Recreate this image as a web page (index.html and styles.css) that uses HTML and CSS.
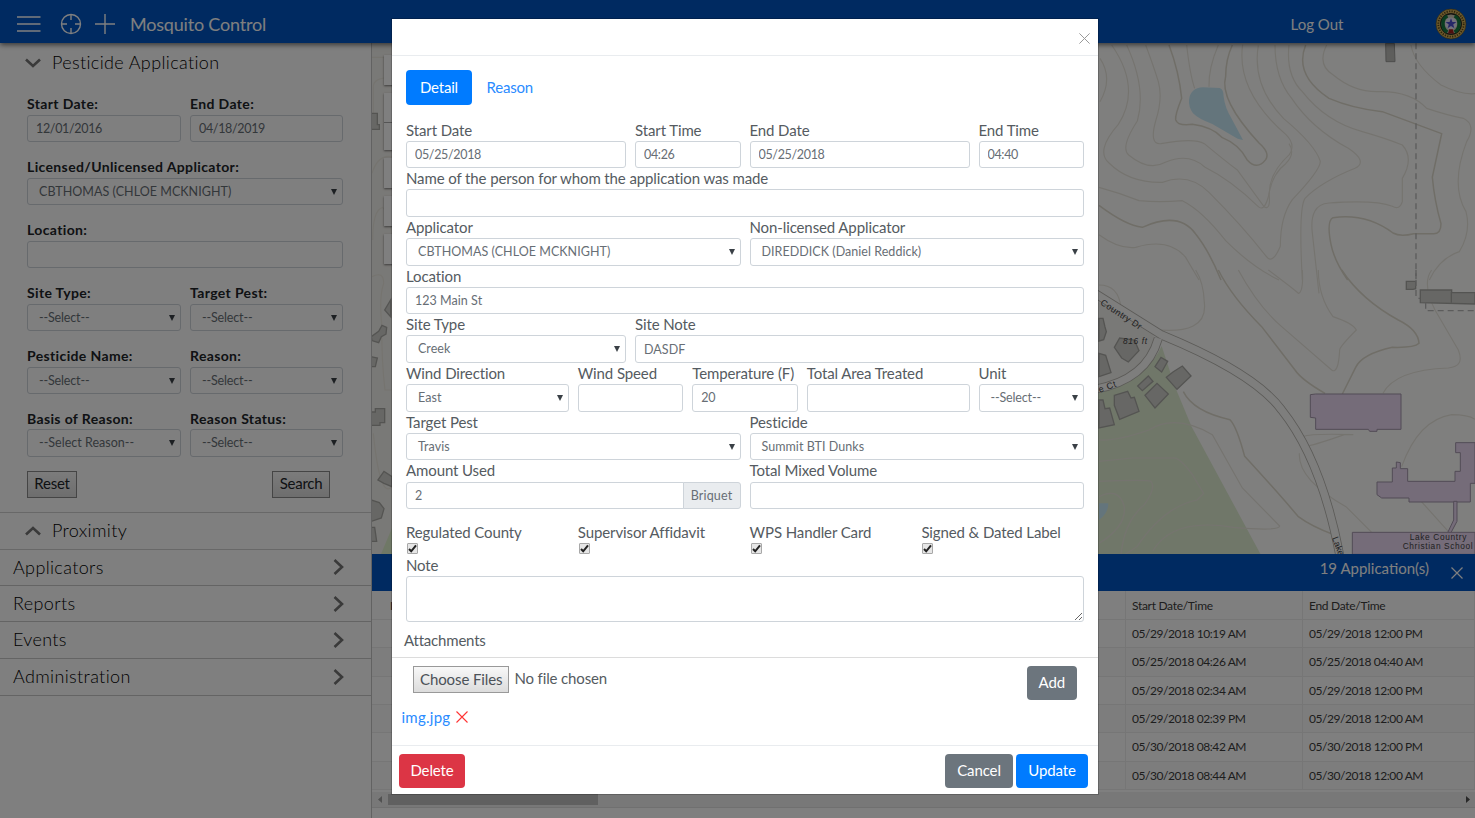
FILE: index.html
```
<!DOCTYPE html>
<html lang="en">
<head>
<meta charset="utf-8">
<title>Mosquito Control</title>
<link rel="stylesheet" href="styles.css">
</head>
<body>
<div class="app">
  <header class="topbar">
    <svg class="ic-menu" width="24" height="20" viewBox="0 0 24 20"><path d="M0 3h23.5M0 10h23.5M0 17h23.5"/></svg>
    <svg class="ic-target" width="22" height="22" viewBox="0 0 22 22"><circle cx="11" cy="11" r="9.5"/><path d="M11 1v6M11 15v6M1 11h6M15 11h6"/></svg>
    <svg class="ic-plus" width="20" height="20" viewBox="0 0 20 20"><path d="M10 0v20M0 10h20"/></svg>
    <h1>Mosquito Control</h1>
    <span class="logout">Log Out</span>
    <svg class="seal" width="32" height="32" viewBox="0 0 32 32">
      <circle cx="16" cy="16" r="15" fill="#d8b45c" stroke="#5c4a14" stroke-width=".6"/>
      <circle cx="16" cy="16" r="12.7" fill="none" stroke="#5a4614" stroke-width="1.8" stroke-dasharray="1.2 1.3"/>
      <circle cx="16" cy="16" r="10.3" fill="#cfcbb8" stroke="#2a2a20" stroke-width="1.4"/>
      <path d="M12.500 8C6.500 10.500 6.500 20.500 12.500 24M19.500 8C25.500 10.500 25.500 20.500 19.500 24" fill="none" stroke="#157a40" stroke-width="3.4"/>
      <circle cx="16" cy="15.500" r="6" fill="#e4e2f4"/>
      <path d="M16 10.200l1.400 3.700 4 .1-3.200 2.400 1.200 3.900L16 18l-3.400 2.300 1.200-3.900-3.200-2.400 4-.1z" fill="#4d4ed0"/>
      <path d="M13 25.500l1.200-4.200h3.600l1.200 4.200z" fill="#9c1c1c"/>
    </svg>
  </header>

  <div class="main">
    <aside class="sidebar">
      <div class="sub first"><svg width="16" height="10" viewBox="0 0 16 10"><path d="M1 1.500l7 6.500 7-6.500"/></svg>Pesticide Application</div>
      <div class="filters">
        <label><b>Start Date:</b><input class="num" value="12/01/2016"></label>
        <label><b>End Date:</b><input class="num" value="04/18/2019"></label>
        <label class="full"><b>Licensed/Unlicensed Applicator:</b><span class="select">CBTHOMAS (CHLOE MCKNIGHT)</span></label>
        <label class="full"><b>Location:</b><input value=""></label>
        <label><b>Site Type:</b><span class="select dash">--Select--</span></label>
        <label><b>Target Pest:</b><span class="select dash">--Select--</span></label>
        <label><b>Pesticide Name:</b><span class="select dash">--Select--</span></label>
        <label><b>Reason:</b><span class="select dash">--Select--</span></label>
        <label><b>Basis of Reason:</b><span class="select dash wide">--Select Reason--</span></label>
        <label><b>Reason Status:</b><span class="select dash">--Select--</span></label>
      </div>
      <div class="filter-actions"><button class="native">Reset</button><button class="native">Search</button></div>
      <div class="sub second"><svg width="16" height="10" viewBox="0 0 16 10"><path d="M1 8.500L8 2l7 6.500"/></svg>Proximity</div>
      <nav>
        <a>Applicators<svg width="11" height="16" viewBox="0 0 11 16"><path d="M1.500 1L9 8l-7.500 7"/></svg></a>
        <a>Reports<svg width="11" height="16" viewBox="0 0 11 16"><path d="M1.500 1L9 8l-7.500 7"/></svg></a>
        <a>Events<svg width="11" height="16" viewBox="0 0 11 16"><path d="M1.500 1L9 8l-7.500 7"/></svg></a>
        <a>Administration<svg width="11" height="16" viewBox="0 0 11 16"><path d="M1.500 1L9 8l-7.500 7"/></svg></a>
      </nav>
    </aside>

    <section class="content">
      <div class="map">
        <svg class="map-art" viewBox="372 43 1103 511" width="1103" height="511">
          <!-- west edge -->
          <g transform="translate(0 0)">
            <rect x="372" y="43" width="30" height="511" fill="#f3f2ee"/>
            <g class="contour thin" transform="scale(.33333)"><path d="M1116 172h60M1120 340V260q0-26 50-28M1116 520q18-58 60-50M1118 720q0-90 30-98q20 20 28 90M1116 830q35-18 35 20q-14 40-6 120q0 120 10 200h20M1120 1300q20 200 56 160"/></g>
            <g class="bldg" transform="scale(.33333)"><path d="M1114 340h18v34h6v14h-24z"/><path d="M1154 930l18-30v50z"/><path d="M1114 1010l22-16 10-18 14 6-2 20-14 8-8 18-20-6z"/><path d="M1114 1070l18 4-6 26h-12z"/><path d="M1114 1236h12v-10h28v42h-14v8h-26z"/><path d="M1134 1440l18-26 24 16v30l-24-10z"/><path d="M1114 1500l24 8 14 18-8 28-30 10z"/><path d="M1114 1582h10l6 42h-16z"/></g>
            <path d="M381 554l11-26v26z" fill="#dff0cc"/>
          </g>
          <!-- north-east contours -->
          <g transform="translate(1095 0) scale(.33333)">
            <path d="M282 300q4-36 42-38l50 2q12 4 12 26 4 34 24 66l34 64-16-4-76-44q-40-14-58-32-14-20-12-40z" fill="#c9ebf8"/>
            <g class="contour thin">
              <path d="M50 135q90 130 20 238-70 80-28 116 60 60 160 58 80-30 140 30 100 100 170 190 20 30 44-28 0-90 36-140 84-88 84-115-16-50-110-128-96-100-76-220"/>
              <path d="M95 135q60 130 32 228-52 80-26 102 60 50 110 22 70-30 118 14 80 40 160 118 20 20 34-40 0-60 60-115 20-30-10-60-150-130-130-270"/>
              <path d="M152 135q26 70 38 110 14 50-8 118-20 72 16 68 100-18 130 0 60 50 100 80l80 110q20 10 14-40 10-60 50-90 30-30 10-60"/>
              <path d="M15 175q40 60 0 130"/><path d="M275 135q10 90 24 130M370 135q-30 70-28 125"/>
              <path d="M582 135q-10 90 40 140 70 90 180 120 70 20 120 40 36 40 0 100v70q-8 26-30 14-50-20-190-10-60 4-50 90l20 181"/>
              <path d="M540 135q0 100 50 160 60 90 170 150 60 40 20 60-100 40-150 90-20 30-8 245"/>
              <path d="M12 562q60 16 120 40 60 6 130 0 60 30 130 120 80 80 160 118"/>
              <path d="M12 704q60 44 110 38 100-30 150 30l40 68"/>
              <path d="M695 135q-30 60 20 90 60 50 130 50 100-4 150 50 60 20 110 30 40 20 10 70-50 130-2 210 16 60-20 120-60 20-90 85"/>
              <path d="M948 135q10 60 90 120 60 30 102 26"/>
            </g>
            <g class="contour">
              <path d="M222 135q30 80 38 160-20 50-18 64 6 20 50 14 60 8 90 40 50 20 74 66 30 34 56 0 14-20-20-50-120-130-100-200 0-50 20-94"/>
              <path d="M632 135q-36 90 70 160 70 30 160 40l178 66-28 130q6 70 26 140 0 30-22 30l-60 0q-40 10-62-2-80-60-180-46-20 10-6 80 10 50 50 107"/>
              <path d="M12 616q80 60 130 66 110-50 160 20 40 50 76 138"/>
            </g>
            <path d="M872 130h26l2 55h-27z" fill="#bcbcb9" stroke="#9a9a98" stroke-width="3"/>
            <path d="M963 130v710" class="parcel"/>
          </g>
          <!-- south-east: park, roads, school -->
          <g transform="translate(1095 270) scale(.33333)">
            <path d="M0 90L175 195 190 235 100 330 0 360z" fill="#f3f2ee"/>
            <path d="M12 370Q160 320 200 228L240 350 290 470 498 855H0V370z" fill="#e1efd2"/>
            <path d="M12 700h28q0 30-28 50z" fill="#c9ebf8"/>
            <g class="contour thin">
              <path d="M12 45q60 0 66 70M170 178q170 20 158-80-2-60-26-98M430 0q60 110 130 170l150 130q20 14 24-60 0-10 50-60-10-20-70-40Q670 80 670 0M520 0q80 60 90 70 16-4 12-70M12 510q50 4 150-30 80-50 190 14l90 160 112 114q0 16-140 4-180-30-240 70M12 574l100-10h120q20-6 60 50l34 56-20 20q-100 20-180 140l-46 30M12 634q140-6 156 0 16 20-20 70-60 50-70 150M12 680q60-30 76 30 6 60-76 110M628 520q-40 30 120-26M613 550q-4 80 140 160l80 80M1010 0q-30 40 10 120l70 120q20 50-30 54-160 6-196 76M920 590q50-140 150-156 50 0 70 14M975 690l90 100M625 500q20-10 150-6"/>
            </g>
            <g class="contour"><path d="M370 0q40 80 130 170l100 130q20 30 90 70M740 0q60 90 170 150 60 30 62 70-14 14-80 12-90 20-110 60l-40 80M265 365q30 60 140 84 20 20 44 110 110 120 160 180 40 30 110 56"/></g>
            <g class="road"><path d="M0 70L200 195Q480 310 560 420 680 570 735 860"/><path d="M190 205Q155 330 0 358"/></g>
            <g class="road-fill"><path d="M0 70L200 195Q480 310 560 420 680 570 735 860"/><path d="M190 205Q155 330 0 358"/></g>
            <g class="bldg">
              <path d="M12 145h12l6 26 4 14-8 24-14 4z"/><path d="M12 250l20 6 16 52-36 12z"/>
              <path d="M58 232l16-28 44 6 14 32-32 34-20-12z"/>
              <path d="M180 290l18-28 20 12-18 32z"/><path d="M214 322l20-16 28-18 26 30-42 40z"/><path d="M150 376l36-36 34 32-40 42z"/><path d="M128 348l32-30 14 16-32 28z"/>
              <path d="M58 376l40-12 10 20 10-2 14 42-58 24-16-42z"/><path d="M12 390h12l6 26 14-2 14 50-46 10z"/>
              <path d="M934 34h28v22l-8 2h-20z"/><path d="M976 60h94v8h70v34l-164-4z"/><path d="M1069 66v32"/>
            </g>
            <g class="school">
              <path d="M646 374l16-2h256v106h-72v6h-22l-4-6H662v-34l-16-2z"/>
              <path d="M1140 518h-58v30h14v56h-16v30H938v-38h-22v-18l-12-2v18h-12v42h-46v38l14 10h82v12h184v-56h14z"/>
              <path d="M1076 694h10v60l-18 34h-10l18-38z"/><path d="M772 787h368v66H772z"/>
            </g>
            <path d="M963 0v82l12 4M992 98v24h148" class="parcel"/>
            <g class="map-text">
              <text transform="translate(14 102) rotate(33)" textLength="142">Country Dr</text>
              <text x="84" y="221" textLength="72" font-style="italic" class="small">816 ft</text>
              <text transform="translate(14 368) rotate(-20)" textLength="54">e Ct</text>
              <text transform="translate(711 804) rotate(70)">Lake</text>
              <text x="944" y="810" textLength="170" class="small">Lake Country</text>
              <text x="923" y="838" textLength="210" class="small">Christian School</text>
            </g>
          </g>
        </svg>
        <div class="map-tools"><i></i><i class="tall"></i><i></i><i></i><i></i></div>
      </div>
      <div class="results-bar"><span>19 Application(s)</span><svg width="12" height="12" viewBox="0 0 12 12"><path d="M.5.5l11 11M11.500.5l-11 11"/></svg></div>
      <div class="results">
        <div class="row head"><span>ID</span><span>Start Date/Time</span><span>End Date/Time</span></div>
        <div class="row"><span></span><span>05/29/2018 10:19 AM</span><span>05/29/2018 12:00 PM</span></div>
        <div class="row alt"><span></span><span>05/25/2018 04:26 AM</span><span>05/25/2018 04:40 AM</span></div>
        <div class="row"><span></span><span>05/29/2018 02:34 AM</span><span>05/29/2018 12:00 PM</span></div>
        <div class="row alt"><span></span><span>05/29/2018 02:39 PM</span><span>05/29/2018 12:00 AM</span></div>
        <div class="row"><span></span><span>05/30/2018 08:42 AM</span><span>05/30/2018 12:00 PM</span></div>
        <div class="row alt"><span></span><span>05/30/2018 08:44 AM</span><span>05/30/2018 12:00 AM</span></div>
      </div>
      <div class="scrollbar"><svg width="4" height="7" viewBox="0 0 4 7"><path d="M4 0v7L0 3.500z" fill="#a3a3a3"/></svg><div class="thumb"></div><svg width="4" height="7" viewBox="0 0 4 7"><path d="M0 0v7l4-3.500z" fill="#505050"/></svg></div>
    </section>
  </div>
</div>

<div class="backdrop">
  <div class="modal">
    <div class="modal-head"><svg width="11" height="11" viewBox="0 0 11 11"><path d="M.4.4l10.200 10.200M10.600.4L.4 10.600"/></svg></div>
    <div class="tabs"><span class="tab active">Detail</span><span class="tab">Reason</span></div>
    <div class="form">
      <label class="c4">Start Date<input class="num" value="05/25/2018"></label>
      <label class="c2">Start Time<input class="num" value="04:26"></label>
      <label class="c4">End Date<input class="num" value="05/25/2018"></label>
      <label class="c2">End Time<input class="num" value="04:40"></label>
      <label class="c12">Name of the person for whom the application was made<input value=""></label>
      <label class="c6">Applicator<span class="select">CBTHOMAS (CHLOE MCKNIGHT)</span></label>
      <label class="c6">Non-licensed Applicator<span class="select">DIREDDICK (Daniel Reddick)</span></label>
      <label class="c12">Location<input value="123 Main St"></label>
      <label class="c4">Site Type<span class="select">Creek</span></label>
      <label class="c8">Site Note<input value="DASDF"></label>
      <label class="c3">Wind Direction<span class="select">East</span></label>
      <label class="c2">Wind Speed<input value=""></label>
      <label class="c2">Temperature (F)<input class="num" value="20"></label>
      <label class="c3">Total Area Treated<input value=""></label>
      <label class="c2">Unit<span class="select dash">--Select--</span></label>
      <label class="c6">Target Pest<span class="select">Travis</span></label>
      <label class="c6">Pesticide<span class="select">Summit BTI Dunks</span></label>
      <label class="c6">Amount Used<span class="group"><input class="num" value="2"><span class="addon">Briquet</span></span></label>
      <label class="c6">Total Mixed Volume<input value=""></label>
    </div>
    <div class="checks">
      <label>Regulated County<span class="check"><svg width="9" height="9" viewBox="0 0 9 9"><path d="M1 5l2.200 2.300L8 1.300"/></svg></span></label>
      <label>Supervisor Affidavit<span class="check"><svg width="9" height="9" viewBox="0 0 9 9"><path d="M1 5l2.200 2.300L8 1.300"/></svg></span></label>
      <label>WPS Handler Card<span class="check"><svg width="9" height="9" viewBox="0 0 9 9"><path d="M1 5l2.200 2.300L8 1.300"/></svg></span></label>
      <label>Signed &amp; Dated Label<span class="check"><svg width="9" height="9" viewBox="0 0 9 9"><path d="M1 5l2.200 2.300L8 1.300"/></svg></span></label>
    </div>
    <label class="note">Note<textarea></textarea></label>
    <div class="attach-title">Attachments</div>
    <div class="attach">
      <button class="native">Choose Files</button><span class="nofile">No file chosen</span><button class="btn gray add">Add</button>
    </div>
    <div class="file"><a>img.jpg</a><svg width="12" height="12" viewBox="0 0 12 12"><path d="M.5.5l11 11M11.500.5l-11 11"/></svg></div>
    <div class="modal-foot"><button class="btn red">Delete</button><button class="btn gray cancel">Cancel</button><button class="btn blue">Update</button></div>
  </div>
</div>
</body>
</html>
```
FILE: styles.css
```
* { box-sizing: border-box; }
body { margin: 0; width: 1475px; height: 818px; overflow: hidden; background: #fff; font: 15px/1.3 Lato, "Liberation Sans", sans-serif; color: #212529; }
svg { display: block; flex: none; fill: none; }
button, input, textarea { font-family: inherit; margin: 0; }

.app { display: flex; flex-direction: column; height: 818px; }
.topbar { position: relative; z-index: 2; flex: none; display: flex; align-items: center; height: 43px; padding: 5px 8px 0 17px; background: #0054c2; box-shadow: 0 2px 5px rgba(0,0,0,.55); color: #fff; }
.topbar svg path, .topbar .ic-target circle { stroke-width: 1.4; }
.ic-menu, .ic-target, .ic-plus { stroke: #fff; }
.ic-target { margin-left: 18.500px; }
.ic-plus { margin-left: 13.500px; }
.topbar h1 { margin: 2px 0 0 15px; font-size: 18px; font-weight: 400; letter-spacing: -.2px; }
.logout { margin: 1px 0 0 auto; }
.topbar .seal { margin-left: 91.500px; }
.topbar .seal path { stroke-width: 0; }
.topbar .seal path[stroke] { stroke-width: 3.4; }

.main { flex: 1; display: flex; min-height: 0; }
.sidebar { width: 372px; flex: none; border-right: 1px solid #c4c4c4; background: #fff; }
.sidebar svg { stroke: #747474; stroke-width: 2.6; }
.sub { display: flex; align-items: center; gap: 11.500px; padding-left: 24.500px; font-size: 18px; font-weight: 300; letter-spacing: .36px; color: #000; }
.sub.first { height: 39px; }
.sub.second { height: 38px; border-top: 1px solid #d0d0d0; border-bottom: 1px solid #d0d0d0; }
.filters { display: grid; grid-template-columns: 154px 153px; column-gap: 9px; row-gap: 14.850px; padding: 12.400px 0 0 27px; }
.filters label { height: 48px; display: flex; flex-direction: column; }
.filters .full { grid-column: 1 / 3; }
.filters b { height: 21px; line-height: 19px; font-size: 14px; letter-spacing: .36px; white-space: nowrap; }
.filter-actions { display: flex; justify-content: space-between; padding: 14px 41px 0 27px; height: 55px; }
.native { height: 27px; padding: 0 6px; border: 1px solid #999; background: linear-gradient(#f8f8f8, #dcdcdc); font-size: 15px; letter-spacing: -.1px; color: #4c5258; }
.filter-actions .native { color: #212529; padding: 0 0 2px; width: 50px; border-color: #8a8a8a; letter-spacing: -.25px; }
.filter-actions .native + .native { width: 58px; }
nav a { display: flex; align-items: center; justify-content: space-between; height: 36.400px; padding: 0 27px 0 13px; border-bottom: 1px solid #c8c8c8; font-size: 18px; font-weight: 300; letter-spacing: .36px; color: #000; }
nav a:last-child { height: 37.400px; }

input, .select, .addon { display: block; height: 27.500px; width: 100%; min-width: 0; padding: 0 8px; border: 1px solid #ced4da; border-radius: 3px; background: #fff; color: #676e75; font-size: 12.500px; line-height: 25px; letter-spacing: .04px; white-space: nowrap; }
input.num { letter-spacing: -.33px; }
.select { position: relative; padding-left: 11px; }
.select::after { content: ""; position: absolute; right: 5px; top: 10px; border: 3px solid transparent; border-top: 6px solid #3a4046; border-bottom: 0; }
.select.dash { letter-spacing: -.15px; }
.select.dash.wide { letter-spacing: .02px; }

.content { flex: 1; min-width: 0; display: flex; flex-direction: column; background: #fff; }
.map { position: relative; height: 511px; flex: none; background: #fefefd; overflow: hidden; }
.contour { stroke: #e0dccf; stroke-width: 4.500; }
.contour.thin { stroke: #ebe8df; stroke-width: 3.500; }
.bldg { fill: #cfcfca; stroke: #a9a9a5; stroke-width: 4; }
.school { fill: #ead8f3; stroke: #a497ab; stroke-width: 3; }
.parcel { stroke: #b8b8b8; stroke-width: 4; stroke-dasharray: 18 12; }
.road { stroke: #b7b5ae; stroke-width: 27; }
.road-fill { stroke: #fcfcfb; stroke-width: 22; }
.map-text { fill: #444; font: 27px "Liberation Sans", Arial, sans-serif; }
.map-text .small { font-size: 25px; }
.map-tools { position: absolute; left: 12px; top: 12px; display: grid; gap: 8px; }
.map-tools i { display: block; width: 30px; height: 30px; background: #fff; box-shadow: 0 1px 2px rgba(0,0,0,.5); }
.map-tools .tall { height: 57px; background: linear-gradient(#fff 29px, #aaa 29px, #aaa 30px, #fff 30px); }

.results-bar { display: flex; align-items: center; height: 37px; flex: none; padding: 0 12px 0 0; background: #0054c2; color: #fff; }
.results-bar span { margin: -8px 22px 0 auto; }
.results-bar svg { stroke: #fff; stroke-width: 1.200; }
.results { height: 201px; flex: none; overflow: hidden; }
.row { display: grid; grid-template-columns: 753.500px 177px 1fr; height: 28.350px; border-bottom: 1px solid #ececec; background: #fff; font-size: 12px; letter-spacing: -.44px; line-height: 28px; color: #3c3c3c; }
.row.head { height: 29px; line-height: 30px; letter-spacing: -.3px; }
.row.alt { background: #fafafa; }
.row span { padding-left: 6.500px; border-right: 1px solid #ececec; white-space: nowrap; }
.row span:first-child { padding-left: 18px; }
.scrollbar { display: flex; align-items: center; height: 16px; padding: 0 5px 0 6px; background: #f1f1f1; border-bottom: 1px solid #e0e0e0; }
.thumb { width: 210px; height: 11px; margin: 0 auto 0 6px; background: #c1c1c1; }

.backdrop { position: fixed; z-index: 10; inset: 0; background: rgba(0,0,0,.5); padding: 18px 0 0 391px; }
.modal { position: relative; width: 708px; height: 777px; background: #fff; border: 1px solid rgba(0,0,0,.2); background-clip: padding-box; color: #555b61; display: flex; flex-direction: column; }
.modal-head { display: flex; justify-content: flex-end; height: 37px; flex: none; padding: 14px 8px 0; border-bottom: 1px solid #e9ecef; }
.modal-head svg { stroke: #999; stroke-width: 1; }
.tabs { display: flex; padding: 14px 0 0 14px; height: 63.500px; flex: none; }
.tab { height: 35px; line-height: 34px; padding: 0 14px; border-radius: 4px; color: #2a8bff; letter-spacing: -.2px; }
.tab.active { background: #007bff; color: #fff; width: 66px; margin-right: .500px; }
.form { display: grid; grid-template-columns: repeat(12, minmax(0, 1fr)); column-gap: 9px; grid-auto-rows: 48.700px; padding: 0 14px 0 14px; flex: none; }
.form label, .checks label, .note { display: block; font-size: 15px; line-height: 21.200px; letter-spacing: -.11px; white-space: nowrap; }
.c2 { grid-column: span 2; } .c3 { grid-column: span 3; } .c4 { grid-column: span 4; } .c6 { grid-column: span 6; } .c8 { grid-column: span 8; } .c12 { grid-column: span 12; }
.group { display: flex; }
.group input { border-radius: 3px 0 0 3px; }
.group .addon { width: 58px; flex: none; padding: 0; text-align: center; margin-left: -1px; border-radius: 0 3px 3px 0; background: #e9ecef; letter-spacing: .15px; }
.checks { display: grid; grid-template-columns: repeat(4, 171.800px); padding: 13px 0 0 14px; flex: none; }
.check { display: block; width: 11px; height: 11px; margin: 0 0 0 1px; border: 1px solid #a8a8a8; border-radius: 1px; background: #e6e6e6; }
.check svg { stroke: #222; stroke-width: 2; }
.note { padding: 1px 14px 0 14px; }
.note textarea { display: block; width: 100%; height: 46px; border: 1px solid #ced4da; border-radius: 3px; resize: vertical; background: #fff; }
.attach-title { height: 36px; flex: none; padding: 8px 0 0 12px; font-size: 15px; line-height: 20px; letter-spacing: -.2px; border-bottom: 1px solid #dcdcdc; }
.attach { display: flex; height: 48px; flex: none; padding: 7.500px 21px 0 21px; }
.nofile { margin: 3px auto 0 5px; letter-spacing: -.14px; }
.file { display: flex; align-items: center; gap: 6px; padding-left: 9.500px; height: 22px; color: #2a8bff; letter-spacing: .25px; }
.file svg { stroke: #f33; stroke-width: 1.100; }
.btn { height: 34px; border: 0; border-radius: 4px; color: #fff; font-size: 15px; letter-spacing: -.12px; padding: 0 0 1px; }
.btn.add { width: 50.500px; }
.red { width: 66px; background: #dc3545; }
.gray { width: 68px; background: #6c757d; }
.blue { width: 72px; background: #007bff; }
.modal-foot { display: flex; gap: 3px; margin-top: auto; height: 49px; flex: none; padding: 7.500px 10px 0 7px; border-top: 1px solid #e9ecef; }
.cancel { margin-left: auto; }
```
